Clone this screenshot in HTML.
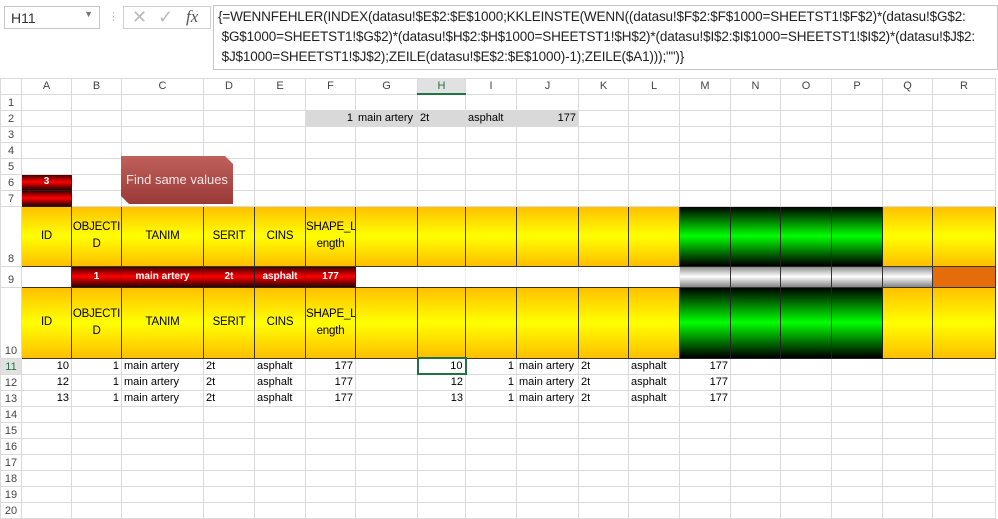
<!DOCTYPE html>
<html><head><meta charset="utf-8"><style>
*{margin:0;padding:0;box-sizing:border-box}
body{width:998px;height:515px;overflow:hidden;background:#fff;font-family:"Liberation Sans",Arial,sans-serif;position:relative;color:#000}
.nb{position:absolute;left:4px;top:6px;width:96px;height:23px;border:1px solid #c6c6c6;font-size:14px;padding:3px 6px;color:#333}
.nb span{position:absolute;right:6px;top:2px;font-size:9px;color:#777}
.ib{position:absolute;left:123px;top:6px;width:88px;height:23px;border:1px solid #d0d0d0;color:#bbb}
.fb{position:absolute;left:213px;top:5px;width:785px;height:65px;border:1px solid #c6c6c6;font-size:13.5px;line-height:20px;padding:1px 4px;color:#222;letter-spacing:-0.15px;white-space:nowrap;overflow:hidden}
table{position:absolute;left:0;top:78px;width:995px;border-collapse:collapse;table-layout:fixed;font-size:11px}
td{border:1px solid #dadada;padding:0 2px;white-space:nowrap;overflow:hidden;height:16px;line-height:14px}
.ch td{height:15px;text-align:center;color:#444;background:#fff;border-color:#dadada;font-size:11px}
td.rh{text-align:center;color:#444;padding:0;vertical-align:bottom;font-size:11px}
.r{text-align:right}
.gr{background:#d9d9d9}
.y{background:linear-gradient(#ffc000,#ffff00 50%,#ffc000);border:1px solid #3a3a2a;text-align:center;font-size:11.5px;line-height:17px;padding:0;letter-spacing:-0.2px}
.g{background:linear-gradient(#000,#00ff00 50%,#000);border:1px solid #222}
.rd{background:linear-gradient(#300,#ff0000 50%,#300);color:#fff;font-weight:bold;text-align:center;border:1px solid #222;font-size:10px}
.s{background:linear-gradient(#888,#fff 50%,#888);border:1px solid #333}
.o{background:#e46c0a;border:1px solid #333}
.btn{position:absolute;left:121px;top:156px;width:112px;height:48px;background:linear-gradient(#c0605c,#9a3a38);font-size:13px;text-align:center;line-height:48px;clip-path:polygon(0 0,104px 0,112px 8px,112px 48px,8px 48px,0 40px);color:#f7e4e4}
</style></head><body>
<div class="nb">H11<span>▼</span></div>
<div style="position:absolute;left:108px;top:10px;color:#bbb;font-size:11px">⋮</div>
<div class="ib"><span style="position:absolute;left:8px;top:0;font-size:18px">✕</span><span style="position:absolute;left:34px;top:0;font-size:18px">✓</span><span style="position:absolute;left:62px;top:0;font-size:17px;font-style:italic;font-family:'Liberation Serif',serif;color:#555">fx</span></div>
<div class="fb">{=WENNFEHLER(INDEX(datasu!$E$2:$E$1000;KKLEINSTE(WENN((datasu!$F$2:$F$1000=SHEETST1!$F$2)*(datasu!$G$2:<br>&nbsp;$G$1000=SHEETST1!$G$2)*(datasu!$H$2:$H$1000=SHEETST1!$H$2)*(datasu!$I$2:$I$1000=SHEETST1!$I$2)*(datasu!$J$2:<br>&nbsp;$J$1000=SHEETST1!$J$2);ZEILE(datasu!$E$2:$E$1000)-1);ZEILE($A1)));"")}</div>
<table>
<colgroup><col style="width:21px"><col style="width:50px"><col style="width:50px"><col style="width:82px"><col style="width:51px"><col style="width:51px"><col style="width:50px"><col style="width:62px"><col style="width:48px"><col style="width:51px"><col style="width:62px"><col style="width:50px"><col style="width:51px"><col style="width:51px"><col style="width:50px"><col style="width:51px"><col style="width:51px"><col style="width:50px"><col style="width:63px"></colgroup>
<tr class="ch"><td></td><td>A</td><td>B</td><td>C</td><td>D</td><td>E</td><td>F</td><td>G</td><td style="background:#e1e1e1;border-bottom:2px solid #217346;color:#217346">H</td><td>I</td><td>J</td><td>K</td><td>L</td><td>M</td><td>N</td><td>O</td><td>P</td><td>Q</td><td>R</td></tr>
<tr><td class="rh">1</td><td></td><td></td><td></td><td></td><td></td><td></td><td></td><td></td><td></td><td></td><td></td><td></td><td></td><td></td><td></td><td></td><td></td><td></td></tr>
<tr><td class="rh">2</td><td></td><td></td><td></td><td></td><td></td><td class="gr r">1</td><td class="gr">main artery</td><td class="gr">2t</td><td class="gr">asphalt</td><td class="gr r">177</td><td></td><td></td><td></td><td></td><td></td><td></td><td></td><td></td></tr>
<tr><td class="rh">3</td><td></td><td></td><td></td><td></td><td></td><td></td><td></td><td></td><td></td><td></td><td></td><td></td><td></td><td></td><td></td><td></td><td></td><td></td></tr>
<tr><td class="rh">4</td><td></td><td></td><td></td><td></td><td></td><td></td><td></td><td></td><td></td><td></td><td></td><td></td><td></td><td></td><td></td><td></td><td></td><td></td></tr>
<tr><td class="rh">5</td><td></td><td></td><td></td><td></td><td></td><td></td><td></td><td></td><td></td><td></td><td></td><td></td><td></td><td></td><td></td><td></td><td></td><td></td></tr>
<tr><td class="rh">6</td><td class="rd">3</td><td></td><td></td><td></td><td></td><td></td><td></td><td></td><td></td><td></td><td></td><td></td><td></td><td></td><td></td><td></td><td></td><td></td></tr>
<tr><td class="rh">7</td><td class="rd"></td><td></td><td></td><td></td><td></td><td></td><td></td><td></td><td></td><td></td><td></td><td></td><td></td><td></td><td></td><td></td><td></td><td></td></tr>
<tr style="height:60px"><td class="rh">8</td><td class="y">ID</td><td class="y">OBJECTI<br>D</td><td class="y">TANIM</td><td class="y">SERIT</td><td class="y">CINS</td><td class="y">SHAPE_L<br>ength</td><td class="y"></td><td class="y"></td><td class="y"></td><td class="y"></td><td class="y"></td><td class="y"></td><td class="g"></td><td class="g"></td><td class="g"></td><td class="g"></td><td class="y"></td><td class="y"></td></tr>
<tr style="height:21px"><td class="rh">9</td><td style="border-color:#333"></td><td class="rd">1</td><td class="rd">main artery</td><td class="rd">2t</td><td class="rd">asphalt</td><td class="rd">177</td><td style="border-color:#333 #eee"></td><td style="border-color:#333 #eee"></td><td style="border-color:#333 #eee"></td><td style="border-color:#333 #eee"></td><td style="border-color:#333 #eee"></td><td style="border-color:#333 #eee"></td><td class="s"></td><td class="s"></td><td class="s"></td><td class="s"></td><td class="s"></td><td class="o"></td></tr>
<tr style="height:71px"><td class="rh">10</td><td class="y">ID</td><td class="y">OBJECTI<br>D</td><td class="y">TANIM</td><td class="y">SERIT</td><td class="y">CINS</td><td class="y">SHAPE_L<br>ength</td><td class="y"></td><td class="y"></td><td class="y"></td><td class="y"></td><td class="y"></td><td class="y"></td><td class="g"></td><td class="g"></td><td class="g"></td><td class="g"></td><td class="y"></td><td class="y"></td></tr>
<tr><td class="rh" style="background:#e1e1e1;color:#217346">11</td><td class="r">10</td><td class="r">1</td><td>main artery</td><td>2t</td><td>asphalt</td><td class="r">177</td><td></td><td class="r" style="border:2px solid #217346">10</td><td class="r">1</td><td>main artery</td><td>2t</td><td>asphalt</td><td class="r">177</td><td></td><td></td><td></td><td></td><td></td></tr>
<tr><td class="rh">12</td><td class="r">12</td><td class="r">1</td><td>main artery</td><td>2t</td><td>asphalt</td><td class="r">177</td><td></td><td class="r">12</td><td class="r">1</td><td>main artery</td><td>2t</td><td>asphalt</td><td class="r">177</td><td></td><td></td><td></td><td></td><td></td></tr>
<tr><td class="rh">13</td><td class="r">13</td><td class="r">1</td><td>main artery</td><td>2t</td><td>asphalt</td><td class="r">177</td><td></td><td class="r">13</td><td class="r">1</td><td>main artery</td><td>2t</td><td>asphalt</td><td class="r">177</td><td></td><td></td><td></td><td></td><td></td></tr>
<tr><td class="rh">14</td><td></td><td></td><td></td><td></td><td></td><td></td><td></td><td></td><td></td><td></td><td></td><td></td><td></td><td></td><td></td><td></td><td></td><td></td></tr>
<tr><td class="rh">15</td><td></td><td></td><td></td><td></td><td></td><td></td><td></td><td></td><td></td><td></td><td></td><td></td><td></td><td></td><td></td><td></td><td></td><td></td></tr>
<tr><td class="rh">16</td><td></td><td></td><td></td><td></td><td></td><td></td><td></td><td></td><td></td><td></td><td></td><td></td><td></td><td></td><td></td><td></td><td></td><td></td></tr>
<tr><td class="rh">17</td><td></td><td></td><td></td><td></td><td></td><td></td><td></td><td></td><td></td><td></td><td></td><td></td><td></td><td></td><td></td><td></td><td></td><td></td></tr>
<tr><td class="rh">18</td><td></td><td></td><td></td><td></td><td></td><td></td><td></td><td></td><td></td><td></td><td></td><td></td><td></td><td></td><td></td><td></td><td></td><td></td></tr>
<tr><td class="rh">19</td><td></td><td></td><td></td><td></td><td></td><td></td><td></td><td></td><td></td><td></td><td></td><td></td><td></td><td></td><td></td><td></td><td></td><td></td></tr>
<tr><td class="rh">20</td><td></td><td></td><td></td><td></td><td></td><td></td><td></td><td></td><td></td><td></td><td></td><td></td><td></td><td></td><td></td><td></td><td></td><td></td></tr>
</table>
<div class="btn">Find same values</div>
</body></html>
